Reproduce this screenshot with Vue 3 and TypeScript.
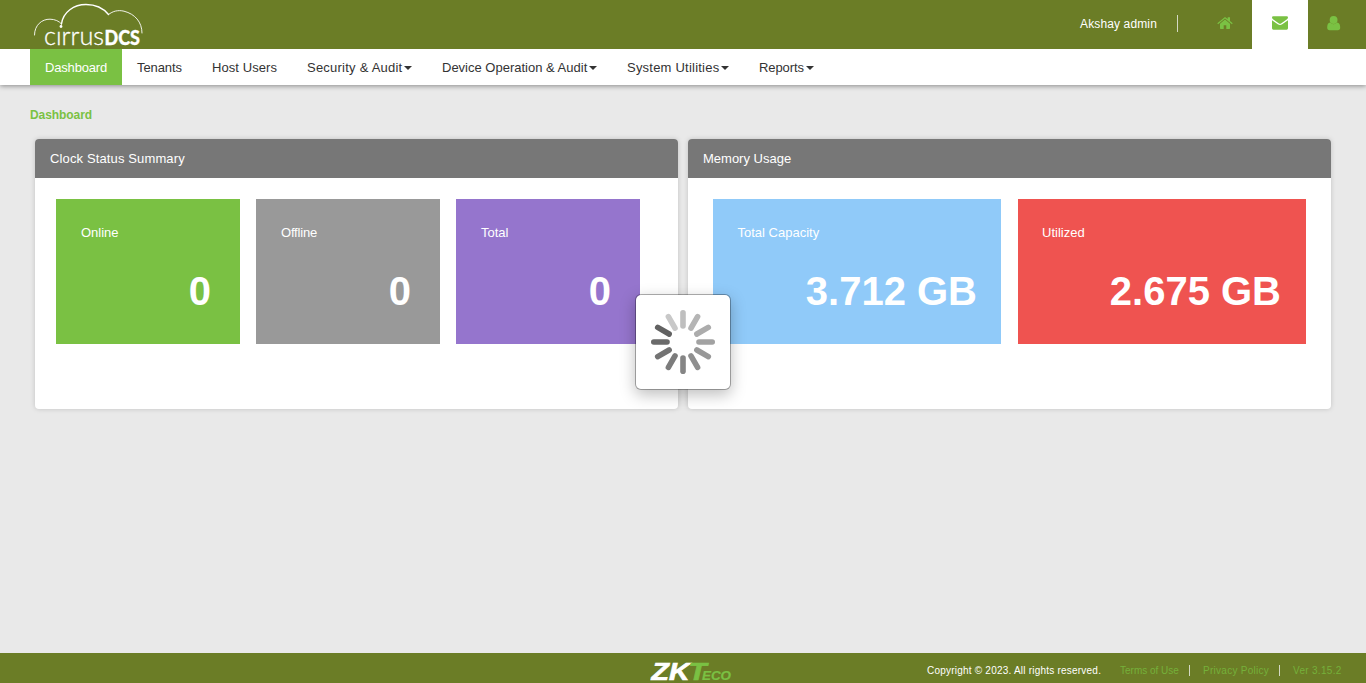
<script setup lang="ts">
interface NavItem { label: string; key: string; menu?: boolean }
interface Tile { label: string; value: string; tone: string }
interface Panel { title: string; key: string; tiles: Tile[] }

const nav: NavItem[] = [
  { label: 'Dashboard', key: 'dashboard' },
  { label: 'Tenants', key: 'tenants' },
  { label: 'Host Users', key: 'users' },
  { label: 'Security & Audit', key: 'security', menu: true },
  { label: 'Device Operation & Audit', key: 'device', menu: true },
  { label: 'System Utilities', key: 'system', menu: true },
  { label: 'Reports', key: 'reports', menu: true },
]

const panels: Panel[] = [
  {
    title: 'Clock Status Summary',
    key: 'clocks',
    tiles: [
      { label: 'Online', value: '0', tone: 'green' },
      { label: 'Offline', value: '0', tone: 'gray' },
      { label: 'Total', value: '0', tone: 'purple' },
    ],
  },
  {
    title: 'Memory Usage',
    key: 'memory',
    tiles: [
      { label: 'Total Capacity', value: '3.712 GB', tone: 'blue' },
      { label: 'Utilized', value: '2.675 GB', tone: 'red' },
    ],
  },
]

// Spoke shades, clockwise from twelve o'clock
const spokes: string[] = [
  '#bfbfbf', '#b5b5b5', '#acacac', '#a2a2a2', '#989898', '#8f8f8f',
  '#858585', '#7c7c7c', '#737373', '#6a6a6a', '#626262', '#c8c8c8',
]
</script>

<template>
  <div class="page">
    <header class="top">
      <svg class="logo" width="112" height="54" viewBox="0 0 112 54">
        <g fill="none" stroke="#fff" stroke-linecap="round">
          <path d="M1.500 35C1.500 25 9 19 17 19.200C22 19.300 26 21 28.500 24" stroke-width=".9" />
          <path d="M28.500 24C30 12 41 4.500 53 4.500C64 4.500 71 9 75.500 14.500" stroke-width="1.400" />
          <path d="M75.500 14.500C80 11 85 9.800 91 11.200C102 14 109 22 109 33" stroke-width=".9" />
        </g>
        <circle cx="28" cy="26.500" r="1.400" fill="#fff" />
        <text class="word" x="11" y="45" textLength="60" lengthAdjust="spacingAndGlyphs">cırrus</text>
        <text class="word strong" x="71.500" y="45" textLength="35.500" lengthAdjust="spacingAndGlyphs">DCS</text>
      </svg>
      <div class="account">
        <span class="who">Akshay admin</span>
        <i class="divider"></i>
        <a class="action home">
          <svg width="16" height="14" viewBox="0 0 16 14" fill="#7ac143">
            <path d="M8 3.600L13 7.700V12.300Q13 13 12.300 13H9.300V9.200H6.700V13H3.700Q3 13 3 12.300V7.700Z" />
            <path d="M.3 7.300L8 .9L10.700 3.100V1.300H13V5L15.700 7.300L14.900 8.200L8 2.500L1.100 8.200Z" />
          </svg>
        </a>
        <a class="action mail">
          <svg width="16" height="14" viewBox="0 0 16 14" fill="#7ac143">
            <path d="M0 1.500Q0 .3 1.300 .3H14.700Q16 .3 16 1.500Q16 2.700 14.700 3.600L9.400 7.300Q8 8.300 6.600 7.300L1.300 3.600Q0 2.600 0 1.500Z" />
            <path d="M0 4.200L5.800 8.300Q8 9.800 10.200 8.300L16 4.200V12.300Q16 13.700 14.600 13.700H1.400Q0 13.700 0 12.300Z" />
          </svg>
        </a>
        <a class="action user">
          <svg width="14" height="15" viewBox="0 0 14 15" fill="#7ac143">
            <circle cx="6.600" cy="4" r="3.900" />
            <path d="M3.200 6.600Q6.600 9.800 10 6.600C12.400 6.800 13.200 9 13.200 11.600Q13.200 14.300 10.800 14.300H2.600Q.2 14.300 .2 11.600C.2 9 .9 6.800 3.200 6.600Z" />
          </svg>
        </a>
      </div>
    </header>

    <nav class="nav">
      <a v-for="item in nav" :key="item.key" class="item" :class="item.key">
        <span>{{ item.label }}</span><i v-if="item.menu" class="caret"></i>
      </a>
    </nav>

    <main class="content">
      <h1 class="crumb">Dashboard</h1>
      <div class="panels">
        <section v-for="panel in panels" :key="panel.key" class="panel" :class="panel.key">
          <h2 class="title">{{ panel.title }}</h2>
          <div class="tiles">
            <div v-for="tile in panel.tiles" :key="tile.label" class="tile" :class="tile.tone">
              <span class="label">{{ tile.label }}</span>
              <strong class="value">{{ tile.value }}</strong>
            </div>
          </div>
        </section>
      </div>
    </main>

    <footer class="footer">
      <svg class="brand" width="84" height="28" viewBox="0 0 84 28">
        <text class="zk white" x="1.500" y="21.500" textLength="38" lengthAdjust="spacingAndGlyphs">ZK</text>
        <text class="zk" x="38.500" y="21.500" textLength="18" lengthAdjust="spacingAndGlyphs">T</text>
        <text class="zk small" x="52" y="21.500" textLength="29" lengthAdjust="spacingAndGlyphs">ECO</text>
      </svg>
      <div class="legal">
        <span class="copy">Copyright © 2023. All rights reserved.</span>
        <a class="terms">Terms of Use</a>
        <i class="bar"></i>
        <a class="privacy">Privacy Policy</a>
        <i class="bar"></i>
        <a class="version">Ver 3.15.2</a>
      </div>
    </footer>

    <div class="loader">
      <svg width="66" height="66" viewBox="-33 -33 66 66">
        <line v-for="(shade, i) in spokes" :key="i" x1="0" y1="-29.200" x2="0" y2="-16"
          :stroke="shade" stroke-width="5.600" stroke-linecap="round" :transform="`rotate(${i * 30})`" />
      </svg>
    </div>
  </div>
</template>

<style>
body { margin: 0; background: #e9e9e9; }
</style>

<style scoped>
* { box-sizing: border-box; }
.page {
  width: 1366px;
  height: 683px;
  display: flex;
  flex-direction: column;
  overflow: hidden;
  position: relative;
  background: #e9e9e9;
  color: #333;
  font: 13px/20px "Liberation Sans", Arial, sans-serif;
}
.top {
  height: 49px;
  flex: none;
  display: flex;
  justify-content: space-between;
  position: relative;
  z-index: 1;
  background: #6b7d26;
  padding-left: 33px;
}
.logo { flex: none; }
.word { font: 26px Lato, sans-serif; font-weight: 300; fill: #fff; stroke: #fff; stroke-width: .3px; }
.word.strong { font-weight: 900; font-size: 20px; }
.account { display: flex; }
.who { font-size: 12px; line-height: 48px; color: #fff; width: 78px; white-space: nowrap; letter-spacing: .13px; }
.divider { width: 1px; height: 17px; margin: 15px 20px 0 19px; background: #d4d9c3; }
.action { display: flex; justify-content: center; height: 49px; padding-top: 16px; }
.home { width: 54px; }
.mail { width: 56px; background: #fff; }
.user { width: 58px; padding-right: 6px; }
.nav {
  height: 36px;
  flex: none;
  display: flex;
  padding-left: 30px;
  background: #fff;
  box-shadow: 0 1px 5px rgba(0, 0, 0, .42);
}
.item { display: flex; padding: 9px 0 0 15px; white-space: nowrap; }
.item.dashboard { width: 92px; background: #7ac143; color: #fff; letter-spacing: -.17px; }
.tenants { width: 75px; letter-spacing: -.1px; }
.users { width: 95px; letter-spacing: .08px; }
.security { width: 135px; letter-spacing: .23px; }
.device { width: 185px; }
.system { width: 132px; letter-spacing: .22px; }
.reports { letter-spacing: -.1px; }
.caret {
  margin: 8px 0 0 2px;
  width: 8px;
  height: 4px;
  border: 4px solid transparent;
  border-top-color: #333;
  border-bottom: 0;
}
.content { flex: 1; padding: 20px 30px 0; }
.crumb { margin: 0; font-size: 12px; line-height: 20px; color: #7ac143; letter-spacing: -.07px; }
.panels { display: flex; gap: 10px; padding: 14px 5px 0; }
.panel {
  width: 643px;
  height: 270px;
  background: #fff;
  border-radius: 4px;
  overflow: hidden;
  box-shadow: 0 0 5px rgba(0, 0, 0, .17);
}
.title { margin: 0; height: 39px; padding-left: 15px; line-height: 39px; font-size: 13px; font-weight: 400; color: #fff; background: #777; }
.clocks .title { letter-spacing: .13px; }
.tiles { display: flex; gap: 16px; padding: 21px 0 0 21px; }
.memory .tiles { gap: 17px; padding-left: 25px; }
.tile { width: 184px; height: 145px; color: #fff; display: flex; flex-direction: column; padding: 24px 29px 0 25px; }
.memory .tile { width: 288px; padding-right: 25px; }
.label { line-height: 20px; }
.gray .label { letter-spacing: -.2px; }
.value { margin-top: 25px; font-size: 40px; line-height: 46px; text-align: right; white-space: nowrap; }
.green { background: #7ac143; }
.gray { background: #999; }
.purple { background: #9575cd; }
.blue { background: #90caf9; }
.red { background: #ef5350; }
.memory .blue { padding-right: 24px; padding-left: 24.500px; }
.memory .red { padding-left: 24px; }
.footer { height: 30px; flex: none; display: flex; justify-content: space-between; background: #6b7d26; padding-left: 650px; }
.brand { flex: none; margin-top: 5px; height: 28px; }
.zk { font: italic bold 24px "Liberation Sans", Arial, sans-serif; fill: #7ac143; stroke: #7ac143; stroke-width: .7px; }
.zk.white { fill: #fff; stroke: #fff; }
.zk.small { font-size: 13px; stroke-width: .2px; }
.legal { display: flex; width: 439px; font-size: 10px; line-height: 35px; white-space: nowrap; }
.copy { width: 193px; color: #fff; letter-spacing: .22px; }
.terms { width: 69px; }
.privacy { width: 76px; letter-spacing: .27px; }
.version { letter-spacing: .3px; }
.terms, .privacy, .version { color: #75b03a; }
.bar { width: 1px; height: 11px; margin: 12px 0 0; background: #d4d9c3; }
.bar + a { margin-left: 13px; }
.loader {
  position: absolute;
  left: 635px;
  top: 294px;
  width: 96px;
  height: 96px;
  z-index: 2;
  display: flex;
  align-items: center;
  justify-content: center;
  background: #fff;
  background-clip: padding-box;
  border: 1px solid rgba(0, 0, 0, .3);
  border-radius: 6px;
  box-shadow: 0 5px 15px rgba(0, 0, 0, .25);
}
</style>
